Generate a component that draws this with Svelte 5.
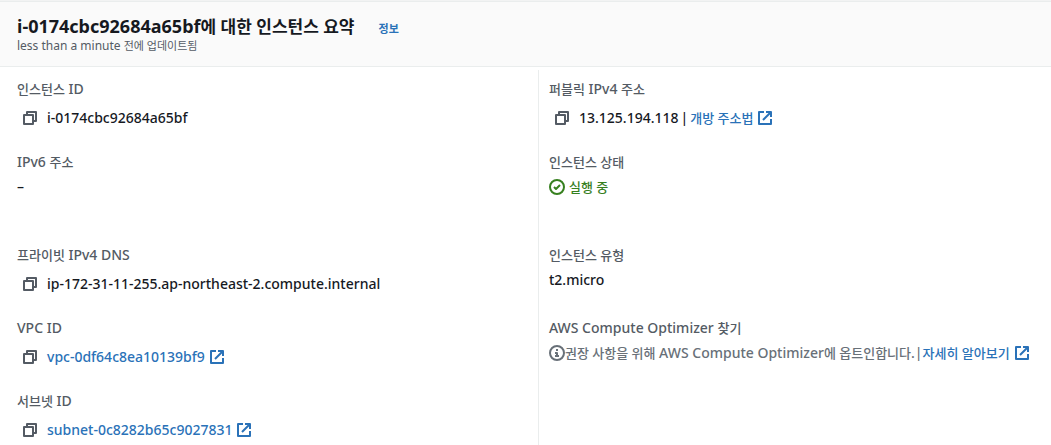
<script>
  const instanceId = 'i-0174cbc92684a65bf';

  const left = [
    { label: '인스턴스 ID', text: instanceId, copy: true },
    { label: 'IPv6 주소', text: '–', tall: true },
    { label: '프라이빗 IPv4 DNS', text: 'ip-172-31-11-255.ap-northeast-2.compute.internal', copy: true },
    { label: 'VPC ID', link: 'vpc-0df64c8ea10139bf9', copy: true },
    { label: '서브넷 ID', link: 'subnet-0c8282b65c9027831', copy: true }
  ];

  const right = [
    { label: '퍼블릭 IPv4 주소', text: '13.125.194.118', link: '개방 주소법', copy: true },
    { label: '인스턴스 상태', text: '실행 중', icon: 'check', tall: true },
    { label: '인스턴스 유형', text: 't2.micro' },
    {
      label: 'AWS Compute Optimizer 찾기',
      text: '권장 사항을 위해 AWS Compute Optimizer에 옵트인합니다.',
      link: '자세히 알아보기',
      icon: 'info'
    }
  ];

  function copyText(item) {
    navigator.clipboard?.writeText(item.text ?? item.link);
  }

  // Hangul is set one step smaller than the latin text next to it
  function runs(text) {
    return text.split(/([가-힣]+(?: [가-힣]+)*)/).filter(Boolean);
  }

  function isHangul(text) {
    return /[가-힣]/.test(text);
  }
</script>

{#snippet mixed(text)}{#each runs(text) as run}{#if isHangul(run)}<span class="ko">{run}</span>{:else}{run}{/if}{/each}{/snippet}

{#snippet field(item)}
  <div class="field" class:tall={item.tall}>
    <dt>{@render mixed(item.label)}</dt>
    <dd class:copyable={item.copy} class:success={item.icon === 'check'} class:hint={item.icon === 'info'}>
      {#if item.copy}
        <button type="button" aria-label="{item.label} 복사" onclick={() => copyText(item)}>
          <svg width="16" height="16" viewBox="0 0 16 16">
            <path d="M2 5h9v9H2z" />
            <path d="M5 5V2h9v9h-3" />
          </svg>
        </button>
      {/if}
      {#if item.icon === 'check'}
        <svg width="16" height="16" viewBox="0 0 16 16">
          <circle cx="8" cy="8" r="7" />
          <path d="M5 8l2 2 4-4" />
        </svg>
      {/if}
      {#if item.icon === 'info'}
        <svg width="16" height="16" viewBox="0 0 16 16">
          <circle cx="8" cy="8" r="7" />
          <path d="M7 5h2M6 8h2v3M6 11h4" />
        </svg>
      {/if}
      {#if item.text}
        <span class="text">{@render mixed(item.text)}</span>
      {/if}
      {#if item.text && item.link}
        <span class="divider">|</span>
      {/if}
      {#if item.link}
        <a href="#{item.link}">
          <span>{@render mixed(item.link)}</span>
          <svg width="16" height="16" viewBox="0 0 16 16">
            <path d="M7 2H2v12h12V9" />
            <path d="M9 2h5v5M14 2L6 10" />
          </svg>
        </a>
      {/if}
    </dd>
  </div>
{/snippet}

<section>
  <header>
    <div class="title">
      <h2>{@render mixed(`${instanceId}에 대한 인스턴스 요약`)}</h2>
      <a href="#info">정보</a>
    </div>
    <p>{@render mixed('less than a minute 전에 업데이트됨')}</p>
  </header>

  <div class="columns">
    <dl>
      {#each left as item}
        {@render field(item)}
      {/each}
    </dl>
    <dl>
      {#each right as item}
        {@render field(item)}
      {/each}
    </dl>
  </div>
</section>

<style>
  :global(body) {
    background: #fff;
  }

  section {
    border-top: 1px solid #f2f3f3;
    color: #16191f;
    font-family: "Noto Sans", "Noto Sans CJK KR", sans-serif;
    font-size: 14px;
    font-weight: 500;
    line-height: 22px;
  }

  header {
    background: #fafafa;
    border-top: 1px solid #eaeded;
    border-bottom: 1px solid #eaeded;
    padding: 12px 17px;
  }

  .title {
    display: flex;
    align-items: baseline;
    gap: 24px;
  }

  h2 {
    margin: 0;
    font-size: 18px;
    line-height: 24px;
    font-weight: 700;
  }

  .title a {
    font-size: 11px;
    line-height: 16px;
    font-weight: 700;
  }

  header p {
    margin: 0;
    color: #545b64;
    font-size: 12px;
    font-weight: 400;
    line-height: 16px;
  }

  .ko {
    font-size: 13px;
    line-height: 1;
  }

  h2 .ko {
    font-size: 17px;
  }

  header p .ko {
    font-size: 11px;
  }

  a {
    color: #2a72b8;
    text-decoration: none;
  }

  a:hover {
    text-decoration: underline;
  }

  .columns {
    display: grid;
    grid-template-columns: minmax(0, 521fr) minmax(0, 513fr);
    padding: 3px 0 0 17px;
  }

  dl {
    display: flex;
    flex-direction: column;
    gap: 18px;
    margin: 0;
    padding-top: 8px;
  }

  dl + dl {
    border-left: 1px solid #eaeded;
    padding-left: 10px;
  }

  .field {
    min-height: 55px;
  }

  .tall {
    min-height: 75px;
  }

  dt {
    color: #545b64;
    margin-bottom: 3px;
  }

  dd {
    display: flex;
    align-items: center;
    margin: 0;
    white-space: nowrap;
  }

  .copyable {
    min-height: 30px;
  }

  .success {
    color: #37801f;
  }

  .success .text {
    margin-left: 4px;
  }

  .hint {
    color: #687078;
  }

  .divider {
    margin: 0 2px;
  }

  .hint .divider {
    margin: 0;
  }

  dd a {
    display: flex;
    align-items: center;
    gap: 4px;
  }

  button {
    display: flex;
    margin: 0 4px 0 0;
    padding: 5px;
    border: 0;
    background: none;
    color: #545b64;
    cursor: pointer;
  }

  svg {
    flex: none;
    fill: none;
    stroke: currentColor;
    stroke-width: 2;
    stroke-linejoin: round;
  }
</style>
